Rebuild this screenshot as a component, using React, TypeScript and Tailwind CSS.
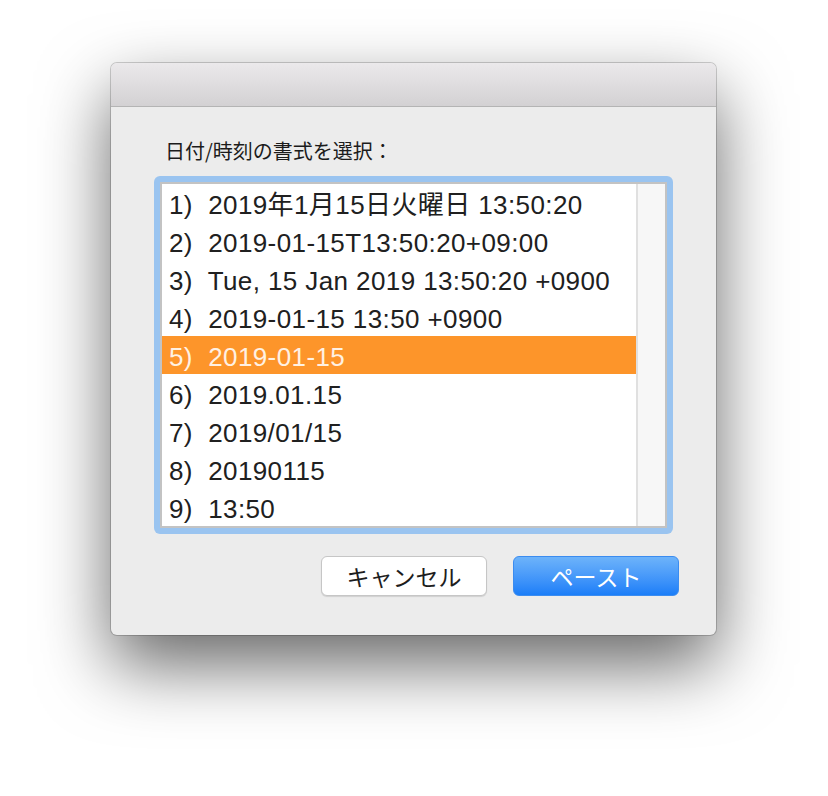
const items = [
  "2019年1月15日火曜日 13:50:20",
  "2019-01-15T13:50:20+09:00",
  "Tue, 15 Jan 2019 13:50:20 +0900",
  "2019-01-15 13:50 +0900",
  "2019-01-15",
  "2019.01.15",
  "2019/01/15",
  "20190115",
  "13:50",
];

const font = { fontFamily: '"Liberation Sans", "Noto Sans CJK JP", sans-serif' };
const jp = { fontFamily: '"Noto Sans CJK JP", "Liberation Sans", sans-serif' };

export default function App() {
  return (
    <div className="min-h-[796px] w-[828px] bg-white pl-[111px] pt-[63px]">
      <div className="flex h-[572px] w-[605px] flex-col overflow-hidden rounded-[6px] bg-[#ececec] shadow-[0_30px_70px_rgba(0,0,0,0.6),0_0_0_1px_rgba(0,0,0,0.18)]">
        {/* title bar */}
        <div className="h-[44px] shrink-0 border-b border-[#b4b4b4] bg-gradient-to-b from-[#ebe9eb] to-[#d3d1d3]" />

        <div className="flex flex-col px-[37px] pt-[30px]">
          <p className="ml-[17px] text-[20px] leading-[28px] text-[#1b1b1b]" style={jp}>
            日付/時刻の書式を選択：
          </p>

          <div className="mx-[6px] mt-[11px] rounded-[6px] bg-[#9ac4f0] p-[6px]">
            <div className="flex border-2 border-[#c3c3c3] bg-white">
              <ul className="flex w-[474px] flex-col" style={font}>
                {items.map((t, i) => {
                  const sel = i === 4;
                  return (
                    <li
                      key={t}
                      className={`flex h-[38px] items-center whitespace-pre pl-[7px] pt-[5px] text-[26px] tracking-[0.4px] ${
                        sel ? "bg-[#fd952a] text-[#fff1e3]" : "text-[#202020]"
                      }`}
                    >
                      {`${i + 1})  ${t}`}
                    </li>
                  );
                })}
              </ul>
              <div className="w-[29px] border-l-2 border-[#e0e0e0] bg-[#f7f7f7]" />
            </div>
          </div>

          <div className="mt-[22px] flex justify-end gap-[26px]" style={jp}>
            <button className="flex h-[40px] w-[166px] items-center justify-center rounded-[6px] border border-[#c6c6c6] bg-white text-[23px] text-[#1d1d1d] shadow-[0_1px_1px_rgba(0,0,0,0.12)]">
              キャンセル
            </button>
            <button className="flex h-[40px] w-[166px] items-center justify-center rounded-[6px] border border-[#3b8cf0] bg-gradient-to-b from-[#6db3fa] to-[#1a7ef8] text-[23px] text-white">
              ペースト
            </button>
          </div>
        </div>
      </div>
    </div>
  );
}
